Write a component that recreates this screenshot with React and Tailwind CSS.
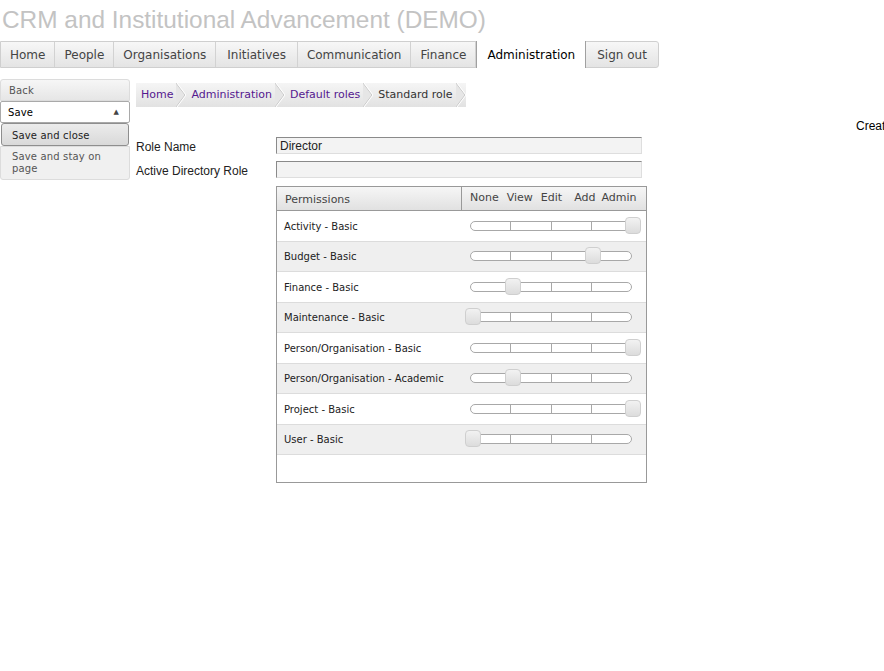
import React from "react";

const tabs = [
  ["Home", "px-[9px]"],
  ["People", "px-[9px]"],
  ["Organisations", "px-[9px]"],
  ["Initiatives", "px-[11px]"],
  ["Communication", "px-[9px]"],
  ["Finance", "px-[9px]"],
  ["Administration", "px-[10px]"],
  ["Sign out", "px-[11px]"],
];
const crumbs = ["Home", "Administration", "Default roles", "Standard role"];
const perms = [
  ["Activity - Basic", 4],
  ["Budget - Basic", 3],
  ["Finance - Basic", 1],
  ["Maintenance - Basic", 0],
  ["Person/Organisation - Basic", 4],
  ["Person/Organisation - Academic", 1],
  ["Project - Basic", 4],
  ["User - Basic", 0],
];

const tahoma = { fontFamily: '"DejaVu Sans", Verdana, sans-serif' };
const arial = { fontFamily: '"Liberation Sans", Arial, sans-serif' };

function Chevron() {
  return (
    <svg width="10" height="24" viewBox="0 0 10 24" className="shrink-0">
      <polygon points="0,0 9,12 0,24" fill="#e6e6e6" />
      <polyline points="0,0 9,12 0,24" fill="none" stroke="#c9c9c9" strokeWidth="1" />
      <polyline points="1,0 10,12 1,24" fill="none" stroke="#ffffff" strokeWidth="1" />
    </svg>
  );
}

function Slider({ value }) {
  return (
    <div className="relative w-[162px] h-[10px]">
      <div className="flex h-full rounded-full border border-[#a8a8a8] bg-white overflow-hidden">
        <div className="flex-1 border-r border-[#a8a8a8]" />
        <div className="flex-1 border-r border-[#a8a8a8]" />
        <div className="flex-1 border-r border-[#a8a8a8]" />
        <div className="flex-1" />
      </div>
      <div
        className="absolute top-[-4px] w-[16px] h-[17px] rounded-[4px] border border-[#cfcfcf] bg-gradient-to-b from-[#f2f2f2] to-[#dcdcdc]"
        style={{ left: value * 40 - 5 }}
      />
    </div>
  );
}

export default function App() {
  return (
    <div className="w-[884px] h-[671px] bg-white overflow-hidden text-[#222]">
      <h1 className="pl-[2px] pt-[4px] h-[41px] text-[24.4px] leading-[32px] text-[#c3c3c3]" style={arial}>
        CRM and Institutional Advancement (DEMO)
      </h1>

      {/* top nav */}
      <div className="flex" style={tahoma}>
        <div className="flex border border-[#cfcfcf] rounded-r-[3px] bg-gradient-to-b from-[#f7f7f7] to-[#e4e4e4]">
          {tabs.map(([t, pad]) => (
            <div
              key={t}
              className={
                t === "Administration"
                  ? pad + " flex items-center text-[12px] text-black bg-white border-x border-[#a0a0a0] -my-px h-[27px]"
                  : pad + " h-[25px] flex items-center text-[12px] text-[#444] border-r border-[#d2d2d2] last:border-r-0"
              }
            >
              {t}
            </div>
          ))}
        </div>
      </div>

      <div className="flex mt-[11px]">
        {/* left actions */}
        <div className="w-[130px] shrink-0 flex flex-col text-[10px] tracking-[0.15px]" style={tahoma}>
          <div className="h-[22px] flex items-center pl-[8px] text-[#555] rounded-t-[3px] border border-[#dcdcdc] bg-gradient-to-b from-[#f6f6f6] to-[#e6e6e6]">
            Back
          </div>
          <div className="h-[22px] flex items-center justify-between pl-[7px] pr-[10px] text-black bg-white border border-[#a9a9a9] rounded-[2px]">
            <span>Save</span>
            <span className="text-[7px] text-[#444]">▲</span>
          </div>
          <div className="h-[23px] mx-[1px] flex items-center pl-[10px] pt-[1px] text-[#222] rounded-[3px] border border-[#8e8e8e] bg-gradient-to-b from-[#ececec] to-[#d9d9d9]">
            Save and close
          </div>
          <div className="h-[34px] flex items-center pl-[11px] pr-[10px] leading-[12px] text-[#555] rounded-b-[3px] border border-[#dcdcdc] bg-[#f0f0f0]">
            Save and stay on page
          </div>
        </div>

        {/* main */}
        <div className="flex-1 pl-[6px] flex flex-col">
          <div className="mt-[4px] flex h-[24px] w-fit bg-gradient-to-b from-[#f5f5f5] to-[#e2e2e2] text-[11px]" style={tahoma}>
            {crumbs.map((c, i) => (
              <div key={c} className="flex items-center">
                <span className={"pl-[5px] pr-[3px] pt-[1px] " + (i === crumbs.length - 1 ? "text-[#333]" : "text-[#55188f]")}>
                  {c}
                </span>
                <Chevron />
              </div>
            ))}
          </div>

          <div className="flex justify-end h-[14px] mt-[12px]">
            <div className="w-[28px] overflow-hidden whitespace-nowrap text-[12px] leading-[14px] text-black" style={arial}>
              Created
            </div>
          </div>

          <div className="flex items-center h-[17px] mt-[4px] text-[12px]" style={arial}>
            <div className="w-[140px] pt-[2px]">Role Name</div>
            <div className="w-[366px] h-[17px] flex items-center px-[3px] bg-[#f3f3f3] border border-[#dedede] border-t-[#8a8a8a] border-l-[#8a8a8a]">
              Director
            </div>
          </div>
          <div className="flex items-center h-[17px] mt-[7px] text-[12px]" style={arial}>
            <div className="w-[140px] pt-[3px]">Active Directory Role</div>
            <div className="w-[366px] h-[17px] bg-[#f3f3f3] border border-[#dedede] border-t-[#8a8a8a] border-l-[#8a8a8a]" />
          </div>

          {/* permissions table */}
          <div className="ml-[140px] mt-[8px] w-[371px] h-[297px] border border-[#999] text-[10px]" style={tahoma}>
            <div className="flex h-[24px] border-b border-[#999] bg-gradient-to-b from-[#f6f6f6] to-[#e1e1e1] text-[11px] text-[#444]">
              <div className="w-[185px] border-r border-[#999] pl-[8px] flex items-end pb-[2px]">Permissions</div>
              <div className="flex items-center pl-[8px] gap-[8px]">
                <span>None</span>
                <span>View</span>
                <span>Edit</span>
                <span className="ml-[4px]">Add</span>
                <span className="-ml-[2px]">Admin</span>
              </div>
            </div>
            {perms.map(([name, v], i) => (
              <div
                key={name}
                className={"flex items-center h-[30.5px] border-b border-[#dcdcdc] " + (i % 2 ? "bg-[#efefef]" : "bg-white")}
              >
                <div className="w-[193px] pl-[7px] pt-[1px] text-[#222]">{name}</div>
                <Slider value={v} />
              </div>
            ))}
          </div>
        </div>
      </div>
    </div>
  );
}
